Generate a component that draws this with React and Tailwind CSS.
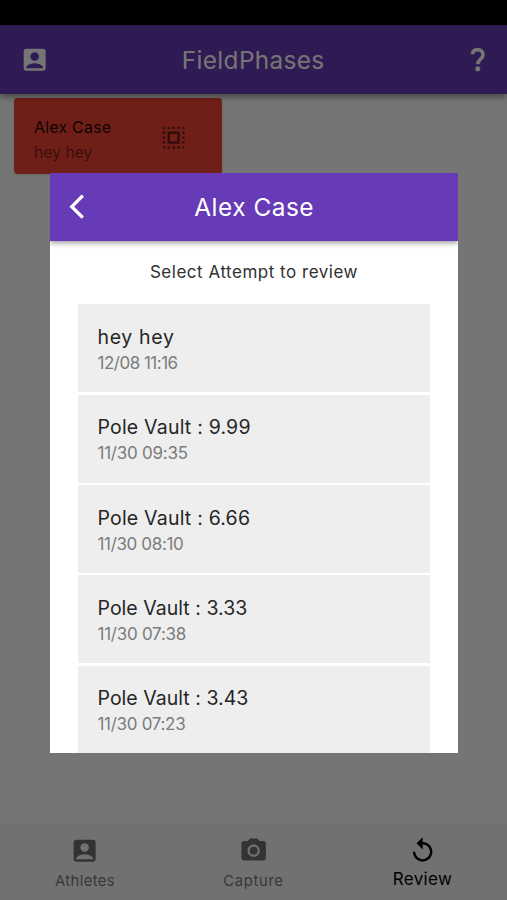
import { MdAccountBox, MdPhotoCamera, MdReplay, MdSelectAll } from "react-icons/md";

const attempts = [
  { title: "hey hey", date: "12/08 11:16", titleSpacing: "tracking-[0.65px]", dateSpacing: "tracking-[-0.5px]" },
  { title: "Pole Vault : 9.99", date: "11/30 09:35", titleSpacing: "tracking-[0.2px]", dateSpacing: "tracking-[-0.25px]" },
  { title: "Pole Vault : 6.66", date: "11/30 08:10", titleSpacing: "tracking-[0.2px]", dateSpacing: "tracking-[-0.35px]" },
  { title: "Pole Vault : 3.33", date: "11/30 07:38", titleSpacing: "tracking-[0.03px]", dateSpacing: "tracking-[-0.25px]" },
  { title: "Pole Vault : 3.43", date: "11/30 07:23", titleSpacing: "tracking-[0.03px]", dateSpacing: "tracking-[-0.3px]" },
];

function HelpIcon() {
  return (
    <svg viewBox="0 0 24 24" className="size-[29.3px]" fill="none" stroke="currentColor">
      <path d="M7.6 7.6C7.9 5.3 9.6 3.8 12 3.8c2.6 0 4.4 1.7 4.4 4.1 0 3.4-4.3 3.9-4.3 7.9" strokeWidth="3" />
      <circle cx="12.1" cy="19.5" r="2.1" fill="currentColor" stroke="none" />
    </svg>
  );
}

function BackIcon() {
  return (
    <svg viewBox="0 0 24 24" className="size-[29.3px]" fill="none" stroke="currentColor">
      <path d="M11.3 3 2.3 12l9 9" strokeWidth="2.8" />
    </svg>
  );
}

function AppBar() {
  return (
    <header className="relative flex h-[68.5px] shrink-0 items-center justify-between bg-[#673ab7] pt-px pr-[15px] pl-[20.4px] text-white shadow-[0_3px_6px_rgba(0,0,0,0.4)]">
      <MdAccountBox className="size-[29.3px]" />
      <h1 className="mr-[6px] text-[24.4px] leading-none tracking-[0.33px]">FieldPhases</h1>
      <HelpIcon />
    </header>
  );
}

function AthleteCard() {
  return (
    <div className="mt-[4.5px] ml-3.5 flex h-[76px] w-[208px] items-center justify-between rounded bg-[#f44336] pr-[34px] pl-5 shadow-sm">
      <div className="flex flex-col gap-[9px] pt-[7px] text-[16px] leading-none">
        <span className="tracking-[0.2px] text-black/90">Alex Case</span>
        <span className="tracking-[-0.2px] text-black/50">hey hey</span>
      </div>
      <MdSelectAll className="mt-[3px] size-[29.3px] text-black/55" />
    </div>
  );
}

function BottomNav() {
  return (
    <nav className="mt-auto grid h-[76px] grid-cols-3 bg-[#f6f6f6] pt-[12.4px] text-center text-[14.8px] leading-none text-black/55">
      <div className="flex flex-col items-center gap-[8.5px] pl-px">
        <MdAccountBox className="size-[29.3px]" />
        <span className="tracking-[0.4px]">Athletes</span>
      </div>
      <div className="flex flex-col items-center gap-[8.5px]">
        <MdPhotoCamera className="size-[29.3px]" />
        <span className="tracking-[0.65px]">Capture</span>
      </div>
      <div className="flex flex-col items-center gap-[5.5px] text-black">
        <MdReplay className="size-[29.3px]" />
        <span className="text-[17px] tracking-[0.35px]">Review</span>
      </div>
    </nav>
  );
}

function ReviewDialog() {
  return (
    <section className="flex h-[580px] w-[408px] flex-col overflow-hidden bg-white">
      <header className="relative flex h-[68px] shrink-0 items-center bg-[#673ab7] pl-[19px] text-white shadow-[0_2px_5px_rgba(0,0,0,0.4)]">
        <BackIcon />
        <h2 className="flex-1 pr-12 text-center text-[24.4px] leading-none tracking-[0.5px]">Alex Case</h2>
      </header>
      <p className="pt-[23px] text-center text-[17px] leading-none tracking-[0.52px] text-[#303030]">Select Attempt to review</p>
      <ul className="mx-7 mt-[23.3px] flex flex-col gap-[2.4px]">
        {attempts.map((a) => (
          <li key={a.date} className="flex h-[88px] shrink-0 flex-col gap-[7.5px] bg-[#eee] pt-[23.5px] pl-[19.5px] leading-none">
            <span className={`text-[19.5px] text-[#262626] ${a.titleSpacing}`}>{a.title}</span>
            <span className={`text-[17px] text-[#7c7c7c] ${a.dateSpacing}`}>{a.date}</span>
          </li>
        ))}
      </ul>
    </section>
  );
}

export default function App() {
  return (
    <div className="relative flex h-[900px] w-[507px] flex-col overflow-hidden bg-[#fefefe] font-[Inter,sans-serif]">
      <div className="h-[25px] shrink-0 bg-black" />
      <AppBar />
      <AthleteCard />
      <BottomNav />
      <div className="absolute inset-0 flex items-start justify-center bg-black/54 pt-[173px] pl-px">
        <ReviewDialog />
      </div>
    </div>
  );
}
